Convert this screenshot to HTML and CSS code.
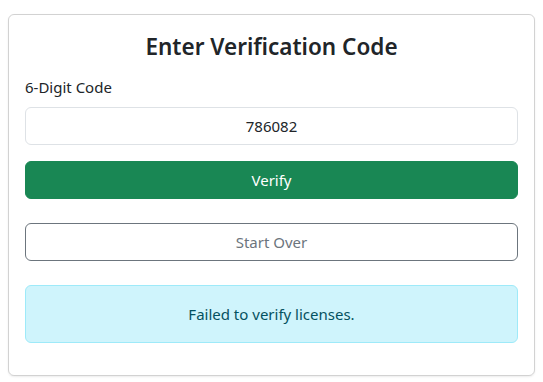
FILE: index.html
```html
<!DOCTYPE html>
<html lang="en">
<head>
<meta charset="utf-8">
<title>Enter Verification Code</title>
<link rel="stylesheet" href="styles.css">
</head>
<body>
<main class="page">
  <section class="card">
    <h3 class="card-title">Enter Verification Code</h3>
    <form class="form">
      <label class="label" for="code">6-Digit Code</label>
      <input class="input" id="code" type="text" value="786082">
      <button class="btn btn-success" type="button">Verify</button>
    </form>
    <button class="btn btn-outline" type="button">Start Over</button>
    <div class="alert">Failed to verify licenses.</div>
  </section>
</main>
</body>
</html>
```
FILE: styles.css
```css
* { box-sizing: border-box; }
html, body { margin: 0; padding: 0; background: #fff; }
body {
  font-family: "Noto Sans", "Open Sans", sans-serif;
  font-size: 15px;
  line-height: 24px;
  color: #212529;
}
.page { padding: 14px 8px 6px; }
.card {
  border: 1px solid rgba(0,0,0,0.175);
  border-radius: 6px;
  box-shadow: 0 1px 2px rgba(0,0,0,0.075);
  padding: 16px;
  display: flex;
  flex-direction: column;
}
.card-title {
  margin: 0 0 14px;
  padding-top: 2px;
  font-size: 22.5px;
  line-height: 28px;
  font-weight: 600;
  text-align: center;
}
.form { display: flex; flex-direction: column; }
.label { margin-bottom: 8px; }
.input {
  font: inherit;
  color: #212529;
  text-align: center;
  height: 38px;
  padding: 6px 12px;
  border: 1px solid #dee2e6;
  border-radius: 6px;
  margin-bottom: 16px;
}
.btn {
  font: inherit;
  height: 38px;
  padding: 6px 12px;
  border-radius: 6px;
  width: 100%;
  cursor: pointer;
}
.btn-success {
  background: #198754;
  border: 1px solid #198754;
  color: #fff;
}
.btn-outline {
  margin-top: 24px;
  background: #fff;
  border: 1px solid #6c757d;
  color: #6c757d;
}
.alert {
  margin: 24px 0 16px;
  padding: 16px;
  background: #cff4fc;
  border: 1px solid #9eeaf9;
  border-radius: 6px;
  color: #055160;
  text-align: center;
}
```
